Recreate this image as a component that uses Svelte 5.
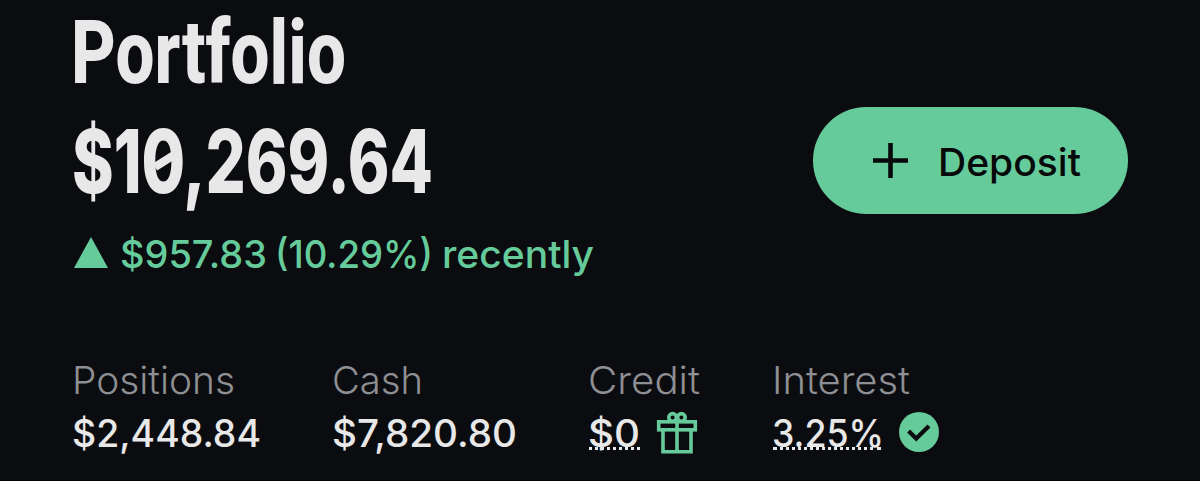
<script>
	let total = '$10,269.64';

	// x, width and text of each part of the change line
	let variacao = [
		{ x: 0, width: 147, text: '$957.83' },
		{ x: 155, width: 158, text: '(10.29%)' },
		{ x: 322, width: 152, text: 'recently' }
	];

	let stats = [
		{ label: 'Positions', value: '$2,448.84', width: 188, textWidth: 189, labelWidth: 163 },
		{ label: 'Cash', value: '$7,820.80', width: 184, textWidth: 185, labelWidth: 91 },
		{ label: 'Credit', value: '$0', icon: 'gift', dotted: true, width: 51, textWidth: 52, labelWidth: 112 },
		{ label: 'Interest', value: '3.25%', icon: 'check', dotted: true, width: 108, textWidth: 112, labelWidth: 138 }
	];
</script>

<main>
	<header>
		<div class="resumo">
			<!-- condensed headings -->
			<h1>
				<svg width="400" height="100">
					<text x="-2" y="83" textLength="275" lengthAdjust="spacingAndGlyphs">Portfolio</text>
				</svg>
			</h1>
			<p class="total">
				<svg width="400" height="127">
					<text x="-1" y="93" textLength="361" lengthAdjust="spacingAndGlyphs">{total}</text>
					<path d="M82 67 101 55" />
				</svg>
			</p>
			<p class="variacao">
				<svg class="seta" width="34" height="31" viewBox="0 0 34 31">
					<path d="M17 0 34 31H0Z" />
				</svg>
				<svg class="linha" width="480" height="52">
					{#each variacao as v}
						<text x={v.x - 1} y="41" textLength={v.width} lengthAdjust="spacingAndGlyphs">{v.text}</text>
					{/each}
				</svg>
			</p>
		</div>

		<button>
			<svg width="35" height="35" viewBox="0 0 35 35">
				<path d="M17.5 0V35M0 17.5H35" />
			</svg>
			<svg class="texto" width="144" height="60">
				<text x="-3" y="44.5" textLength="143" lengthAdjust="spacingAndGlyphs">Deposit</text>
			</svg>
		</button>
	</header>

	<section>
		{#each stats as s}
			<div class="stat {s.label.toLowerCase()}">
				<svg class="label" width={s.labelWidth + 2} height="54">
					<text x="-1" y="40.5" textLength={s.labelWidth} lengthAdjust="spacingAndGlyphs">{s.label}</text>
				</svg>
				<div class="valor">
					<span class:dotted={s.dotted} style="width: {s.width}px">
						<svg width={s.width} height="40">
							<text x="-1" y="40" textLength={s.textWidth} lengthAdjust="spacingAndGlyphs">{s.value}</text>
						</svg>
					</span>
					{#if s.icon === 'gift'}
						<svg class="gift" width="40" height="42" viewBox="0 0 40 42">
							<rect x="1.7" y="9.8" width="36.6" height="8" />
							<path d="M6 18V39.8H34V18M20 9V40" />
							<circle cx="15.6" cy="5.4" r="3.8" />
							<circle cx="24.4" cy="5.4" r="3.8" />
						</svg>
					{:else if s.icon === 'check'}
						<svg class="check" width="40" height="40" viewBox="0 0 40 40">
							<circle cx="20" cy="20" r="20" />
							<path d="M9.6 19 17.2 26.6 30 14" />
						</svg>
					{/if}
				</div>
			</div>
		{/each}
	</section>
</main>

<style>
	:global(body) {
		background: #0b0c10;
		margin: 0;
	}

	main {
		box-sizing: border-box;
		height: 481px;
		padding: 0 72px 0 73px;
		background: #0b0c10;
		border-bottom: 1px solid #000;
		color: #e8e8e8;
		font-family: Inter, 'Liberation Sans', sans-serif;
		font-size: 38.5px;
		font-weight: 500;
	}

	svg {
		display: block;
		flex-shrink: 0;
		overflow: visible;
	}

	text {
		fill: currentColor;
	}

	header {
		display: flex;
		justify-content: space-between;
		height: 353px;
	}

	h1,
	.total,
	.variacao {
		margin: 0;
	}

	h1 {
		font-family: Roboto, 'Liberation Sans', sans-serif;
		font-size: 89.5px;
		font-weight: 800;
	}

	.total {
		font-size: 88.5px;
		font-weight: 800;
	}

	/* slash of the zero */
	.total path {
		stroke: currentColor;
		stroke-width: 8;
	}

	.variacao {
		display: flex;
		gap: 13px;
		padding-left: 1px;
		color: #66cb9a;
	}

	.seta {
		margin-top: 10px;
		fill: currentColor;
	}

	button {
		display: flex;
		align-items: center;
		gap: 33px;
		width: 315px;
		height: 107px;
		margin-top: 107px;
		padding: 0 0 0 60px;
		border: none;
		border-radius: 54px;
		background: #66cb9a;
		color: #07090a;
		font: inherit;
		cursor: pointer;
	}

	button path {
		stroke: currentColor;
		stroke-width: 4.6;
	}

	section {
		display: flex;
	}

	.stat {
		width: 184px;
	}

	.positions {
		width: 260px;
	}

	.cash {
		width: 256px;
	}

	.label {
		color: #8e8f92;
		font-weight: 300;
	}

	.valor {
		display: flex;
		gap: 18px;
		font-size: 38px;
	}

	.dotted {
		height: 40px;
		border-bottom: 3px dotted #e8e8e8;
	}

	.gift {
		margin-top: 5px;
		margin-left: -1px;
		fill: none;
		stroke: #66cb9a;
		stroke-width: 3.6;
	}

	.check {
		margin-top: 5px;
		fill: #66cb9a;
	}

	.check path {
		fill: none;
		stroke: #0b0c10;
		stroke-width: 4.2;
	}
</style>
